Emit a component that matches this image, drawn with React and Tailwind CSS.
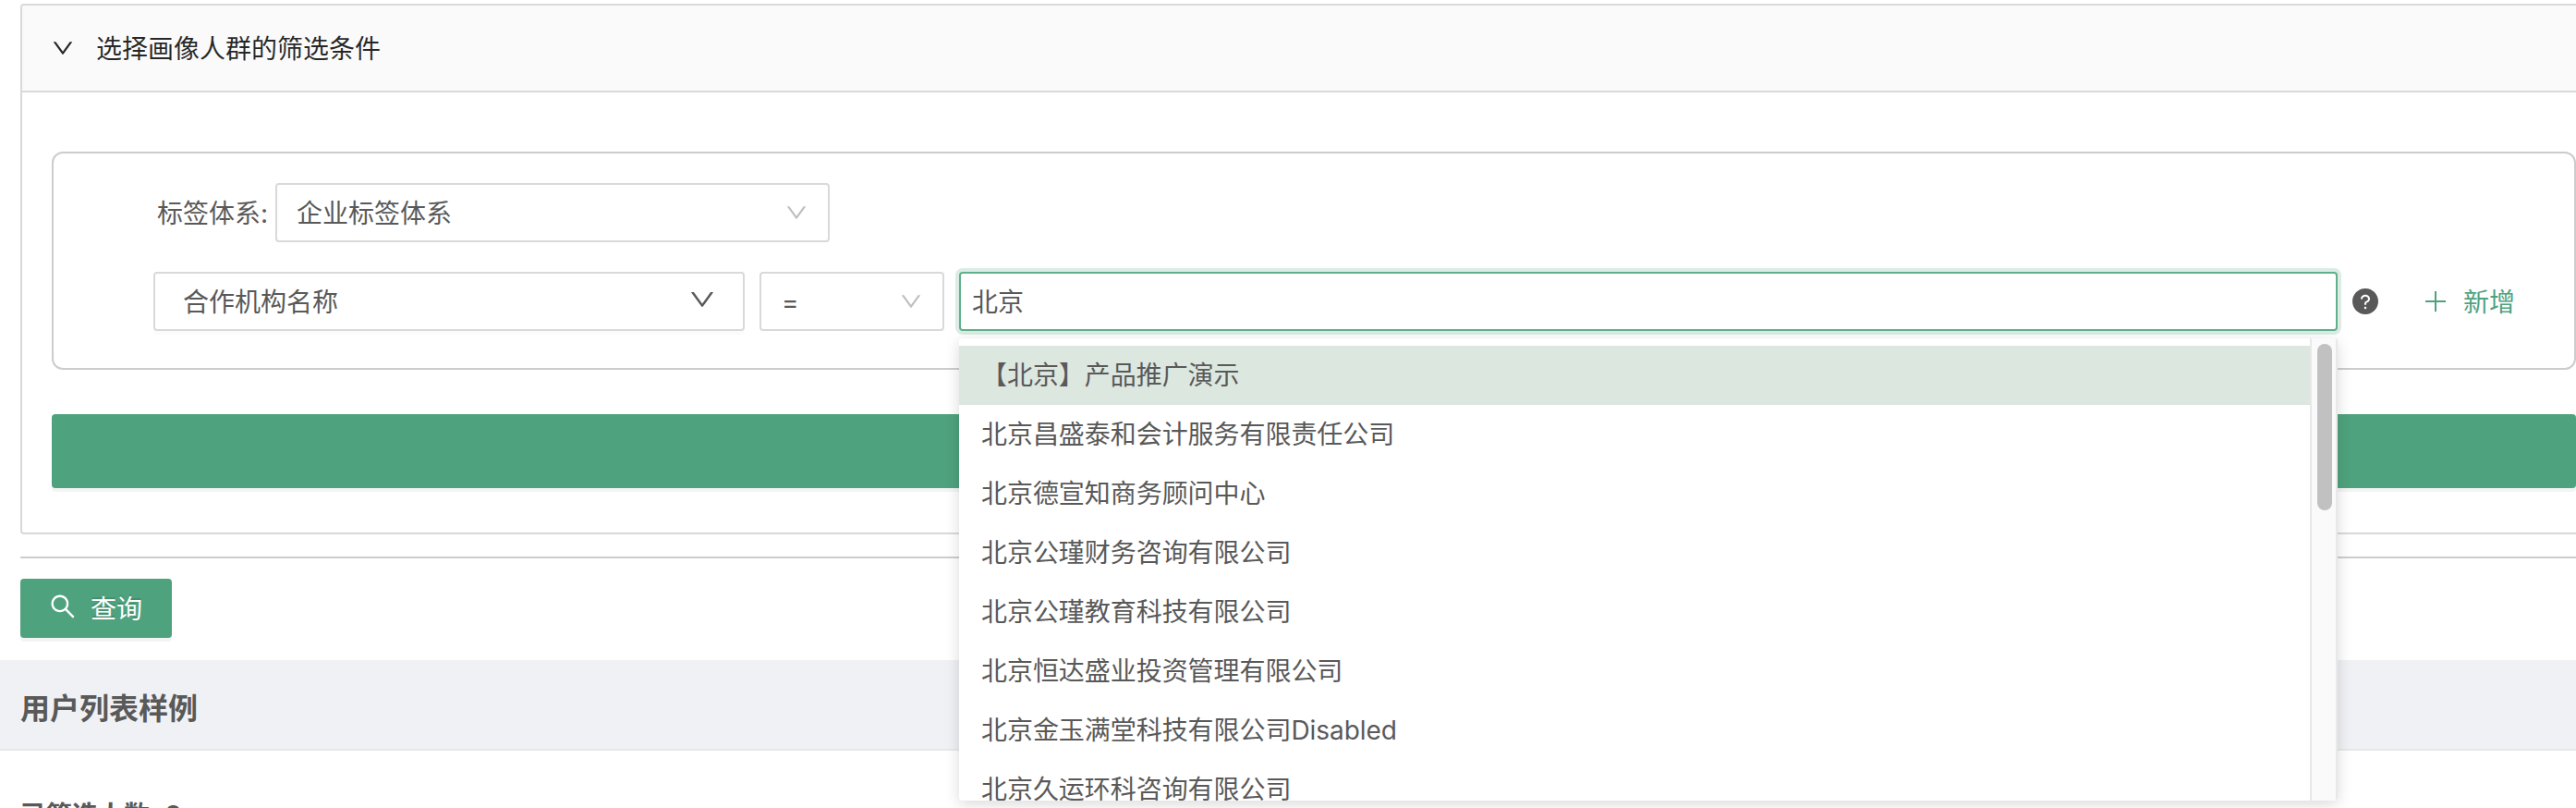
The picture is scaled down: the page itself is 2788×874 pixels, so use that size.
const OPTIONS = [
  "【北京】产品推广演示",
  "北京昌盛泰和会计服务有限责任公司",
  "北京德宣知商务顾问中心",
  "北京公瑾财务咨询有限公司",
  "北京公瑾教育科技有限公司",
  "北京恒达盛业投资管理有限公司",
  "北京金玉满堂科技有限公司Disabled",
  "北京久运环科咨询有限公司",
];

function Down({ className }) {
  return (
    <svg viewBox="64 64 896 896" fill="currentColor" className={className}>
      <path d="M884 256h-75c-5.100 0-9.900 2.500-12.900 6.600L512 654.200 227.900 262.600c-3-4.100-7.800-6.600-12.900-6.600h-75c-6.500 0-10.300 7.400-6.500 12.700l352.600 486.100c12.800 17.600 39 17.600 51.700 0l352.600-486.100c3.900-5.300.1-12.700-6.400-12.700z" />
    </svg>
  );
}

function FilterPanel() {
  return (
    <section className="ml-[22px] mt-1 flex h-[574px] shrink-0 flex-col rounded-l-[4px] border-2 border-r-0 border-[#d9d9d9]">
      <header className="flex h-[92px] shrink-0 items-center rounded-tl-[2px] bg-[#fafafa] pl-8 text-[rgba(0,0,0,0.85)]">
        <Down className="h-6 w-6" />
        <h2 className="ml-6 pt-px">选择画像人群的筛选条件</h2>
      </header>
      <div className="flex grow flex-col border-t-2 border-[#d9d9d9] pl-8 pt-16">
        <div className="flex h-[236px] flex-col gap-8 rounded-[12px] border-2 border-[#cccccc] pt-8">
          <div className="flex h-16 items-center pl-28">
            <span className="w-[128px] whitespace-nowrap pt-px">标签体系:</span>
            <div className="flex h-16 w-[600px] items-center justify-between rounded-[4px] border-2 border-[#d9d9d9] pl-[21px] pr-[22px]">
              <span className="pt-px">企业标签体系</span>
              <Down className="h-6 w-6 text-[#bfbfbf]" />
            </div>
          </div>
          <div className="flex h-16 items-center pl-[108px]">
            <div className="flex h-16 w-[640px] items-center justify-between rounded-[4px] border-2 border-[#d9d9d9] pl-[30px] pr-[30px] shadow-[0_4px_0_rgba(0,0,0,0.015)]">
              <span className="pt-px">合作机构名称</span>
              <Down className="mb-1 h-7 w-7" />
            </div>
            <div className="ml-4 flex h-16 w-[200px] items-center justify-between rounded-[4px] border-2 border-[#d9d9d9] pl-[22px] pr-[22px]">
              <span className="pt-px">=</span>
              <Down className="h-6 w-6 text-[#bfbfbf]" />
            </div>
            <div className="relative ml-4 w-[1492px]">
              <div className="flex h-16 items-center rounded-[4px] border-2 border-[#5fb08b] bg-white pl-3 pt-px shadow-[0_0_0_4px_rgba(78,161,125,0.2)]">
                北京
              </div>
              <Suggestions />
            </div>
            <svg viewBox="64 64 896 896" fill="currentColor" className="ml-4 h-7 w-7 shrink-0">
              <path d="M512 64C264.600 64 64 264.600 64 512s200.600 448 448 448 448-200.600 448-448S759.400 64 512 64zm0 708c-22.100 0-40-17.900-40-40s17.900-40 40-40 40 17.900 40 40-17.900 40-40 40zm62.900-219.500a48.300 48.300 0 0 0-30.900 44.800V620c0 4.400-3.600 8-8 8h-48c-4.400 0-8-3.600-8-8v-21.500c0-23.100 6.700-45.900 19.900-64.900 12.900-18.600 30.900-32.800 52.100-40.900 34-13.100 56-41.600 56-72.700 0-44.100-43.100-80-96-80s-96 35.900-96 80v7.600c0 4.400-3.600 8-8 8h-48c-4.400 0-8-3.600-8-8V420c0-39.300 17.200-76 48.400-103.300C430.400 290.400 470 276 512 276s81.600 14.500 111.600 40.700C654.800 344 672 380.700 672 420c0 57.800-38.100 109.800-97.100 132.500z" />
            </svg>
            <button className="ml-12 flex items-center whitespace-nowrap text-[#4fa27e]">
              <svg viewBox="0 0 28 28" fill="none" stroke="currentColor" strokeWidth="2" className="h-7 w-7">
                <path d="M14 3v22M3 14h22" />
              </svg>
              <span className="ml-4 pt-px">新增</span>
            </button>
          </div>
        </div>
        <div className="mt-12 h-20 shrink-0 rounded-[4px] bg-[#4fa27e] shadow-[0_4px_0_rgba(0,0,0,0.045)]" />
      </div>
    </section>
  );
}

function Suggestions() {
  return (
    <div className="absolute left-0 top-[72px] z-10 flex h-[500px] w-[1492px] overflow-hidden rounded-[4px] bg-white shadow-[0_4px_16px_rgba(0,0,0,0.15)]">
      <ul className="w-[1462px] pt-2 tracking-[-0.05px]">
        {OPTIONS.map((name, i) => (
          <li
            key={name}
            className={
              i === 0
                ? "flex h-16 items-center bg-[#dce7df] px-6"
                : "flex h-16 items-center px-6"
            }
          >
            {name}
          </li>
        ))}
      </ul>
      <div className="w-[30px] border-x-2 border-x-[#e8e8e8] bg-[#fafafa] pl-[6px] pt-[6px]">
        <div className="h-[180px] w-4 rounded-full bg-[#c1c1c1]" />
      </div>
    </div>
  );
}

export default function App() {
  return (
    <main className="flex h-[874px] w-[2788px] flex-col overflow-hidden bg-white font-['Inter','Noto_Sans_CJK_SC',sans-serif] text-[28px] leading-[42px] text-[#595959]">
      <FilterPanel />
      <hr className="ml-[22px] mt-6 shrink-0 border-t-2 border-[#cccccc]" />
      <button className="ml-[22px] mt-[22px] flex h-16 w-[164px] shrink-0 items-center rounded-[4px] bg-[#4fa27e] pl-8 text-white shadow-[0_4px_0_rgba(0,0,0,0.045)] [text-shadow:0_-2px_0_rgba(0,0,0,0.12)]">
        <svg viewBox="64 64 896 896" fill="currentColor" className="mb-1 h-7 w-7">
          <path d="M909.600 854.500L649.900 594.800C690.200 542.700 712 479 712 412c0-80.200-31.300-155.400-87.900-212.100-56.600-56.700-132-87.900-212.100-87.900s-155.500 31.300-212.100 87.900C143.200 256.500 112 331.800 112 412c0 80.100 31.300 155.500 87.900 212.100C256.500 680.800 331.800 712 412 712c67 0 130.600-21.800 182.700-62l259.700 259.600a8.200 8.200 0 0 0 11.600 0l43.600-43.500a8.200 8.200 0 0 0 0-11.600zM570.400 570.400C528 612.700 471.800 636 412 636s-116-23.300-158.400-65.600C211.300 528 188 471.800 188 412s23.300-116.100 65.600-158.400C296 211.300 352.200 188 412 188s116.100 23.200 158.400 65.600S636 352.200 636 412s-23.300 116.100-65.600 158.400z" />
        </svg>
        <span className="ml-4 pt-px">查询</span>
      </button>
      <div className="mt-6 flex h-[98px] shrink-0 items-center border-b-2 border-[#e8e8e8] bg-[#f0f1f5] pl-[22px] pt-2.5 text-[32px] font-bold">
        用户列表样例
      </div>
      <div className="mt-[49px] shrink-0 whitespace-nowrap pl-[22px] font-bold">已筛选人数: 0</div>
    </main>
  );
}
